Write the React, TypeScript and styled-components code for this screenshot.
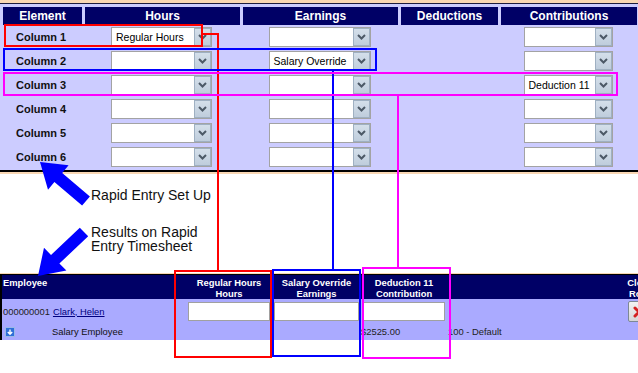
import React from "react";
import styled, { createGlobalStyle } from "styled-components";

// Базовые стили страницы
const GlobalStyle = createGlobalStyle`
  html, body {
    margin: 0;
    padding: 0;
    background: #fff;
  }
  body {
    font-family: "Liberation Sans", Arial, sans-serif;
    overflow: hidden;
  }
`;

const Page = styled.div`
  position: relative;
  width: 638px;
  height: 373px;
  overflow: hidden;
  background: #fff;
`;

/* ---------- Rapid Entry Set Up panel ---------- */

const SetupPanel = styled.div`
  background: #ccccff;
  border-top: 3px solid #f9d7b4;
  border-bottom: 2px solid #000;
  box-shadow: inset 0 1px 0 #1c1c40, 0 2px 0 #f9d7b4;
  padding: 4px 0 1px 3px;
`;

const SetupGrid = styled.div`
  display: grid;
  grid-template-columns: 79px 155px 155px 97px 136px;
  grid-template-rows: 18px;
  grid-auto-rows: 24px;
  column-gap: 3px;
`;

const HeaderCell = styled.div`
  background: #000066;
  color: #fff;
  font-size: 12px;
  font-weight: bold;
  display: flex;
  align-items: center;
  justify-content: center;
`;

const LabelCell = styled.div`
  display: flex;
  align-items: center;
  padding-left: 13px;
  font-size: 11px;
  font-weight: bold;
  color: #111;
`;

const FieldCell = styled.div`
  display: flex;
  align-items: center;
  justify-content: center;
  padding-right: 2px;
`;

const SelectBox = styled.div<{ $width: number }>`
  width: ${(p) => p.$width}px;
  height: 20px;
  box-sizing: border-box;
  border: 1px solid #a3a3a3;
  background: #fff;
  display: flex;
  align-items: stretch;
`;

const SelectText = styled.span`
  flex: 1;
  padding-left: 4px;
  font-size: 10.5px;
  line-height: 18px;
  color: #000;
  white-space: nowrap;
  overflow: hidden;
`;

const DropButton = styled.span`
  width: 17px;
  box-sizing: border-box;
  border: 1px solid #eef3f8;
  outline: 1px solid #9fb0c2;
  outline-offset: -1px;
  background: linear-gradient(#d4dfea, #bfcddc);
  display: flex;
  align-items: center;
  justify-content: center;
`;

/* ---------- notes between panels ---------- */

const Notes = styled.div`
  padding: 15px 0 21px 91px;
  font-size: 14px;
  color: #111;
`;

const NoteLine = styled.div<{ $gap?: number; $lh: number }>`
  margin-top: ${(p) => p.$gap ?? 0}px;
  line-height: ${(p) => p.$lh}px;
`;

/* ---------- Rapid Entry Timesheet ---------- */

const ResultsTable = styled.div`
  width: 658px;
  border-top: 1px solid #000;
  border-left: 2px solid #000;
  box-shadow: 0 -1px 0 #f9d7b4;
  font-size: 9.4px;
`;

const ResultsRow = styled.div<{ $bg: string; $h: number }>`
  display: grid;
  grid-template-columns: 184px 86px 89px 86px 1fr 42px;
  height: ${(p) => p.$h}px;
  background: ${(p) => p.$bg};
`;

const HeadCell = styled.div<{ $left?: boolean }>`
  color: #fff;
  font-weight: bold;
  line-height: 11px;
  padding: 2px 0 0 ${(p) => (p.$left ? 1 : 0)}px;
  text-align: ${(p) => (p.$left ? "left" : "center")};
  white-space: nowrap;
`;

const EmpCell = styled.div`
  display: flex;
  align-items: center;
  padding-left: 1px;
  color: #222;
  white-space: nowrap;
`;

const EmpLink = styled.a`
  color: #000080;
  text-decoration: underline;
  margin-left: 3px;
`;

const InputCell = styled.div`
  padding: 3px 2px 0;
`;

const TextInput = styled.div`
  height: 19px;
  box-sizing: border-box;
  border: 1px solid #a0a0a0;
  background: #fff;
`;

const TextCell = styled.div<{ $shift?: number }>`
  display: flex;
  align-items: center;
  margin-left: ${(p) => p.$shift ?? 0}px;
  color: #222;
  white-space: nowrap;
`;

const ButtonCell = styled.div`
  display: flex;
  justify-content: center;
  padding-top: 2px;
`;

const ClearButton = styled.div`
  width: 22px;
  height: 21px;
  box-sizing: border-box;
  border: 1px solid #7d8894;
  border-radius: 2px;
  background: linear-gradient(#f2f2f2, #d6d6d6);
  display: flex;
  align-items: center;
  justify-content: center;
`;

const ExpandIcon = styled.span`
  display: inline-flex;
  margin-left: 2px;
`;

const SubText = styled.span`
  margin-left: 37px;
  color: #111;
`;

const Overlay = styled.svg`
  position: absolute;
  left: 0;
  top: 0;
  pointer-events: none;
`;

interface SetupRow {
  label: string;
  hours: string;
  earnings: string;
  contributions: string;
}

const setupRows: SetupRow[] = [
  { label: "Column 1", hours: "Regular Hours", earnings: "", contributions: "" },
  { label: "Column 2", hours: "", earnings: "Salary Override", contributions: "" },
  { label: "Column 3", hours: "", earnings: "", contributions: "Deduction 11" },
  { label: "Column 4", hours: "", earnings: "", contributions: "" },
  { label: "Column 5", hours: "", earnings: "", contributions: "" },
  { label: "Column 6", hours: "", earnings: "", contributions: "" },
];

const Select: React.FC<{ value: string; width: number }> = ({ value, width }) => (
  <SelectBox $width={width}>
    <SelectText>{value}</SelectText>
    <DropButton>
      <svg width="9" height="6" viewBox="0 0 9 6">
        <polyline
          points="1,1 4.5,4.5 8,1"
          fill="none"
          stroke="#4c5966"
          strokeWidth="2"
        />
      </svg>
    </DropButton>
  </SelectBox>
);

const App: React.FC = () => {
  return (
    <Page>
      <GlobalStyle />
      <SetupPanel>
        <SetupGrid>
          <HeaderCell>Element</HeaderCell>
          <HeaderCell>Hours</HeaderCell>
          <HeaderCell>Earnings</HeaderCell>
          <HeaderCell>Deductions</HeaderCell>
          <HeaderCell>Contributions</HeaderCell>
          {setupRows.map((row) => (
            <React.Fragment key={row.label}>
              <LabelCell>{row.label}</LabelCell>
              <FieldCell>
                <Select value={row.hours} width={101} />
              </FieldCell>
              <FieldCell>
                <Select value={row.earnings} width={102} />
              </FieldCell>
              <FieldCell />
              <FieldCell>
                <Select value={row.contributions} width={89} />
              </FieldCell>
            </React.Fragment>
          ))}
        </SetupGrid>
      </SetupPanel>

      <Notes>
        <NoteLine $lh={16}>Rapid Entry Set Up</NoteLine>
        <NoteLine $lh={14} $gap={22}>
          Results on Rapid
          <br />
          Entry Timesheet
        </NoteLine>
      </Notes>

      <ResultsTable>
        <ResultsRow $bg="#000066" $h={24}>
          <HeadCell $left>Employee</HeadCell>
          <HeadCell>
            Regular Hours
            <br />
            Hours
          </HeadCell>
          <HeadCell>
            Salary Override
            <br />
            Earnings
          </HeadCell>
          <HeadCell>
            Deduction 11
            <br />
            Contribution
          </HeadCell>
          <HeadCell />
          <HeadCell>
            Clear
            <br />
            Row
          </HeadCell>
        </ResultsRow>

        <ResultsRow $bg="#aaaaff" $h={24}>
          <EmpCell>
            000000001
            <EmpLink>Clark, Helen</EmpLink>
          </EmpCell>
          <InputCell>
            <TextInput />
          </InputCell>
          <InputCell>
            <TextInput />
          </InputCell>
          <InputCell>
            <TextInput />
          </InputCell>
          <div />
          <ButtonCell>
            <ClearButton>
              <svg width="12" height="12" viewBox="0 0 12 12">
                <path
                  d="M2 2 L10 10 M10 2 L2 10"
                  stroke="#d42020"
                  strokeWidth="3"
                  strokeLinecap="round"
                />
              </svg>
            </ClearButton>
          </ButtonCell>
        </ResultsRow>

        <ResultsRow $bg="#aaaaff" $h={17}>
          <EmpCell>
            <ExpandIcon>
              <svg width="10" height="10" viewBox="0 0 10 10">
                <rect x="0.5" y="0.5" width="9" height="9" fill="#2f6fd8" stroke="#9ab8e8" />
                <path d="M5 2.5 V7 M2.8 5 L5 7.3 L7.2 5" stroke="#fff" strokeWidth="1.4" fill="none" />
              </svg>
            </ExpandIcon>
            <SubText>Salary Employee</SubText>
          </EmpCell>
          <div />
          <div />
          <TextCell>$2525.00</TextCell>
          <TextCell $shift={1}>100 - Default</TextCell>
          <div />
        </ResultsRow>
      </ResultsTable>

      {/* пометки поверх скриншота */}
      <Overlay width={638} height={373} viewBox="0 0 638 373">
        <g fill="none" strokeWidth={2}>
          <rect x={5} y={25} width={197} height={21} stroke="#ff0000" />
          <polyline points="202,34 218,34 218,271" stroke="#ff0000" />
          <rect x={175} y={271} width={96} height={86} stroke="#ff0000" />

          <rect x={4} y={49} width={372} height={21} stroke="#0000ff" />
          <line x1={333} y1={70} x2={333} y2={270} stroke="#0000ff" />
          <rect x={273} y={270} width={87} height={86} stroke="#0000ff" />

          <rect x={4} y={73} width={613} height={22} stroke="#ff00ff" />
          <line x1={398} y1={95} x2={398} y2={268} stroke="#ff00ff" />
          <rect x={363} y={268} width={87} height={90} stroke="#ff00ff" />
        </g>
        <polygon
          points="40,162 68.6,165.3 62.2,172.9 89.9,196.4 82.1,205.6 54.4,182.1 48,189.7"
          fill="#0000ff"
        />
        <polygon
          points="38,276 44,247.8 51,254.9 79.8,227.7 88.2,236.3 59.4,263.5 66.4,270.6"
          fill="#0000ff"
        />
      </Overlay>
    </Page>
  );
};

export default App;
